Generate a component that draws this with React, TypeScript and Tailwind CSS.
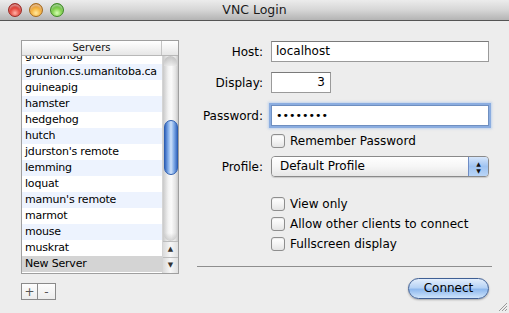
import React from "react";

const rows = [
  "groundhog",
  "grunion.cs.umanitoba.ca",
  "guineapig",
  "hamster",
  "hedgehog",
  "hutch",
  "jdurston's remote",
  "lemming",
  "loquat",
  "mamun's remote",
  "marmot",
  "mouse",
  "muskrat",
  "New Server",
];

function Checkbox({ label }: { label: string }) {
  return (
    <div className="flex items-center h-[14px] gap-[5px]">
      <div className="w-[14px] h-[14px] rounded-[3px] border border-[#8e8e8e] bg-[linear-gradient(to_bottom,#ffffff,#f4f4f4_50%,#e4e4e4)] shadow-[inset_0_1px_1px_rgba(0,0,0,0.08)]" />
      <span className="text-[12px] leading-[14px] text-black">{label}</span>
    </div>
  );
}

export default function App() {
  return (
    <div className="w-[509px] h-[313px] bg-[#ededed] relative overflow-hidden font-['DejaVu_Sans',sans-serif] text-black">
      {/* Title bar */}
      <div className="h-[21px] border-b border-[#555] bg-[linear-gradient(to_bottom,#ececec,#d6d6d6_50%,#b4b4b4)] grid grid-cols-[1fr_auto_1fr] items-center">
        <div className="flex items-center pl-[8px] gap-[7px]">
          <div className="w-[14px] h-[14px] rounded-full border border-[#9a2a24] bg-[radial-gradient(circle_at_50%_75%,#ffb3a8,#e4463b_45%,#b3201a_80%)] shadow-[inset_0_2px_2px_rgba(255,255,255,0.5)]" />
          <div className="w-[14px] h-[14px] rounded-full border border-[#a46a1c] bg-[radial-gradient(circle_at_50%_75%,#ffe9a0,#f5b23c_45%,#c7741a_80%)] shadow-[inset_0_2px_2px_rgba(255,255,255,0.5)]" />
          <div className="w-[14px] h-[14px] rounded-full border border-[#3f8a25] bg-[radial-gradient(circle_at_50%_75%,#d7ffb4,#7fcf4a_45%,#3f9a22_80%)] shadow-[inset_0_2px_2px_rgba(255,255,255,0.5)]" />
        </div>
        <div className="text-[12.5px] leading-[20px] text-[#1a1a1a]">VNC Login</div>
        <div />
      </div>

      <div className="flex">
        {/* Left column */}
        <div className="pl-[21px] pt-[19px] flex flex-col">
          <div className="w-[158px] h-[234px] border border-[#9f9f9f] bg-white flex flex-col">
            {/* header */}
            <div className="h-[15px] flex border-b border-[#b8b8b8] bg-[linear-gradient(to_bottom,#ffffff,#f3f3f3_50%,#e6e6e6)]">
              <div className="w-[140px] border-r border-[#c4c4c4] text-[10px] leading-[14px] text-center text-[#111]">Servers</div>
              <div className="flex-1" />
            </div>
            <div className="flex flex-1 min-h-0">
              <div className="w-[140px] overflow-hidden">
                <div className="mt-[-8px]">
                  {rows.map((r, i) => (
                    <div
                      key={r}
                      className={
                        "h-[16px] pl-[3px] text-[11px] leading-[16px] tracking-[-0.2px] whitespace-nowrap " +
                        (i === rows.length - 1
                          ? "bg-[#d4d4d4]"
                          : i % 2 === 1
                          ? "bg-[#edf3fe]"
                          : "bg-white")
                      }
                    >
                      {r}
                    </div>
                  ))}
                </div>
              </div>
              {/* scrollbar */}
              <div className="flex-1 border-l border-[#d4d4d4] flex flex-col bg-[linear-gradient(to_right,#c9c9c9,#f2f2f2_35%,#fbfbfb_55%,#e2e2e2_85%,#c8c8c8)]">
                <div className="flex-1 relative">
                  <div className="absolute left-[1px] right-[1px] top-0 h-[10px] rounded-t-[7px] bg-[linear-gradient(to_bottom,#9f9f9f,#e6e6e6)] opacity-60" />
                  <div className="absolute left-[1px] right-[1px] bottom-0 h-[8px] rounded-b-[7px] bg-[linear-gradient(to_top,#a8a8a8,transparent)] opacity-50" />
                  <div className="absolute left-[1px] right-[0px] top-[64px] h-[55px] rounded-[7px] border border-[#2f5fb0] bg-[linear-gradient(to_right,#3567bf,#8db6ee_30%,#cfe2fa_50%,#7ea9e6_75%,#3a6cc2)]" />
                </div>
                <div className="h-[16px] border-t border-[#bdbdbd] flex items-center justify-center text-[7px] text-[#333] bg-[linear-gradient(to_right,#dadada,#f7f7f7_50%,#e0e0e0)]">▲</div>
                <div className="h-[16px] border-t border-[#bdbdbd] flex items-center justify-center text-[7px] text-[#333] bg-[linear-gradient(to_right,#dadada,#f7f7f7_50%,#e0e0e0)]">▼</div>
              </div>
            </div>
          </div>
          <div className="mt-[9px] flex w-[35px] h-[17px] border border-[#8a8a8a] bg-[linear-gradient(to_bottom,#fdfdfd,#ececec)]">
            <div className="w-[16px] border-r border-[#8a8a8a] flex items-center justify-center text-[12px] leading-none text-[#555]">+</div>
            <div className="flex-1 flex items-center justify-center text-[12px] leading-none text-[#555]">-</div>
          </div>
        </div>

        {/* Right column */}
        <div className="ml-[18px] w-[295px] pt-[20px] flex flex-col">
          <div className="flex items-center h-[21px]">
            <div className="w-[66px] text-right text-[12px]">Host:</div>
            <div className="ml-[8px] w-[218px] h-[21px] border border-[#9a9a9a] border-t-[#7a7a7a] bg-white text-[12px] leading-[19px] pl-[4px]">localhost</div>
          </div>
          <div className="flex items-center h-[21px] mt-[10px]">
            <div className="w-[66px] text-right text-[12px]">Display:</div>
            <div className="ml-[8px] w-[60px] h-[21px] border border-[#9a9a9a] border-t-[#7a7a7a] bg-white text-[12px] leading-[19px] text-right pr-[5px]">3</div>
          </div>
          <div className="flex items-center h-[21px] mt-[12px]">
            <div className="w-[66px] text-right text-[12px]">Password:</div>
            <div className="ml-[8px] w-[218px] h-[21px] border border-[#6f8fc0] bg-white text-[11px] leading-[19px] pl-[4px] shadow-[0_0_0_2px_rgba(120,160,220,0.75),0_0_2px_3px_rgba(150,185,235,0.5)]">••••••••</div>
          </div>
          <div className="mt-[8px] ml-[74px]">
            <Checkbox label="Remember Password" />
          </div>
          <div className="flex items-center h-[21px] mt-[8px]">
            <div className="w-[66px] text-right text-[12px]">Profile:</div>
            <div className="ml-[8px] w-[218px] h-[21px] rounded-[4px] border border-[#8a8a8a] flex overflow-hidden shadow-[0_1px_1px_rgba(0,0,0,0.15)]">
              <div className="flex-1 bg-[linear-gradient(to_bottom,#ffffff,#f6f6f6_50%,#e6e6e6)] text-[12px] leading-[19px] pl-[8px]">Default Profile</div>
              <div className="w-[20px] border-l border-[#6f8cc4] bg-[linear-gradient(to_bottom,#d6e6fb,#9fc3f1_50%,#b9d5f7)] flex flex-col items-center justify-center text-[6px] leading-[7px] text-[#111]">
                <span>▲</span>
                <span>▼</span>
              </div>
            </div>
          </div>
          <div className="mt-[20px] ml-[74px] flex flex-col gap-[5px]">
            <Checkbox label="View only" />
            <div className="mt-[1px]">
              <Checkbox label="Allow other clients to connect" />
            </div>
            <div className="mt-[1px]">
              <Checkbox label="Fullscreen display" />
            </div>
          </div>
          <div className="mt-[15px] h-[1px] bg-[#8e8e8e]" />
          <div className="mt-[11px] flex justify-end pr-[3px]">
            <div className="w-[81px] h-[21px] rounded-full border border-[#3f5f94] bg-[linear-gradient(to_bottom,#e3eefc,#b7d3f5_45%,#8fb9ee_55%,#cfe4fb)] shadow-[0_1px_2px_rgba(0,0,0,0.3)] text-[12px] leading-[19px] text-center">
              Connect
            </div>
          </div>
        </div>
      </div>

      {/* resize grip */}
      <svg className="absolute right-[1px] bottom-[1px]" width="11" height="11" viewBox="0 0 11 11">
        <path d="M10 2 L2 10 M10 5 L5 10 M10 8 L8 10" stroke="#9a9a9a" strokeWidth="1" />
      </svg>
    </div>
  );
}
